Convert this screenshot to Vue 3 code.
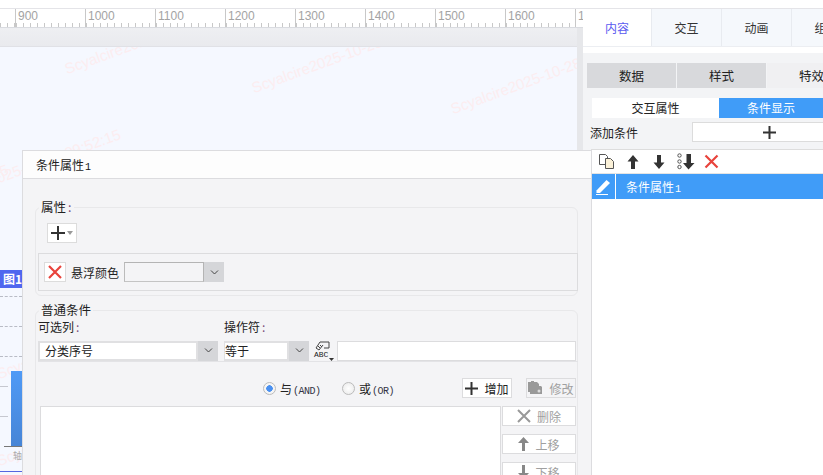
<script setup>
const rulerLabels = [900, 1000, 1100, 1200, 1300, 1400, 1500, 1600]
const tabs = [
  { label: '内容', active: true },
  { label: '交互' },
  { label: '动画' },
  { label: '组件' }
]
const marks = [
  { text: 'Scyalcire2025-10-28', left: 68, top: 13 },
  { text: 'Scyalcire2025-10-28', left: 255, top: 32 },
  { text: 'Scyalcire2025-10-28', left: 454, top: 53 },
  { text: '2025-10-28 09:52:15', left: -8, top: 125 },
  { text: 'Scyalcire2025', left: -78, top: 145 },
  { text: 'Scyalcire', left: 0, top: 318 },
  { text: 'Scyalcire', left: 0, top: 405 }
]
</script>

<template>
  <div class="page">
    <div class="topstrip"></div>
    <div class="main">
      <section class="work">
        <div class="ruler">
          <div class="ruler-lead"></div>
          <div v-for="n in rulerLabels" :key="n" class="ruler-cell">{{ n }}</div>
          <div class="ruler-tail">1</div>
        </div>
        <div class="lower">
          <div class="stage">
            <div class="band"></div>
            <div class="canvas">
              <span v-for="(m, i) in marks" :key="i" class="mark" :style="{ left: m.left + 'px', top: m.top + 'px' }">{{ m.text }}</span>
              <div class="chart-tag">图1</div>
              <div class="dash d1"></div>
              <div class="dash d2"></div>
              <div class="dash d3"></div>
              <div class="tick t1"></div>
              <div class="tick t2"></div>
              <div class="bar"></div>
              <div class="axis"></div>
              <div class="axis-label">轴</div>
              <div class="chart-foot"></div>
            </div>
          </div>
          <div class="gutter"></div>
        </div>
      </section>
      <aside class="side">
        <nav class="tabs">
          <div v-for="t in tabs" :key="t.label" class="tab" :class="{ active: t.active }">{{ t.label }}</div>
        </nav>
        <div class="side-body">
          <div class="subtabs">
            <div class="subtab">数据</div>
            <div class="subtab">样式</div>
            <div class="subtab light">特效</div>
          </div>
          <div class="modes">
            <div class="mode">交互属性</div>
            <div class="mode on">条件显示</div>
          </div>
          <div class="addrow">
            <span class="addlabel">添加条件</span>
            <div class="addbtn">
              <svg width="13" height="13" viewBox="0 0 13 13"><path d="M6.500 0v13M0 6.500h13" stroke="#333" stroke-width="2"/></svg>
            </div>
          </div>
          <div class="listpanel">
            <div class="listtools">
              <svg class="ti-copy" width="17" height="17" viewBox="0 0 17 17"><path d="M1.500 1.500h6l2 2v8h-8z" fill="#fff" stroke="#555"/><path d="M7.500 5.500h5l3 3v7h-8z" fill="#fbf1d8" stroke="#555"/></svg>
              <svg class="ti-up" width="12" height="16" viewBox="0 0 12 16"><path d="M6 1 .5 7.500H4V15h4V7.500h3.500z" fill="#333"/></svg>
              <svg class="ti-down" width="12" height="16" viewBox="0 0 12 16"><path d="M6 15 .5 8.500H4V1h4v7.500h3.500z" fill="#333"/></svg>
              <svg class="ti-more" width="18" height="17" viewBox="0 0 18 17"><circle cx="2.500" cy="2.500" r="1.700" fill="none" stroke="#555"/><circle cx="2.500" cy="8.500" r="1.700" fill="none" stroke="#555"/><circle cx="2.500" cy="14" r="1.700" fill="none" stroke="#555"/><path d="M11.500 16.500 6 10h3.500V1h4.500v9h3.500z" fill="#333"/></svg>
              <svg class="ti-del" width="15" height="15" viewBox="0 0 15 15"><path d="M1.500 1.500l12 12M13.500 1.500l-12 12" stroke="#e8433c" stroke-width="2.200"/></svg>
            </div>
            <div class="listitem">
              <div class="pen">
                <svg width="16" height="16" viewBox="0 0 16 16"><path d="M1.500 11.500 11.500 1 15 4 5 14H1.500z" fill="#fff"/><path d="M1 15.500h12" stroke="#fff"/></svg>
              </div>
              <span class="itemtext">条件属性<i class="num">1</i></span>
            </div>
          </div>
        </div>
      </aside>
    </div>

    <div class="dialog">
      <header class="dhead">条件属性<i class="num dark">1</i></header>
      <div class="dbody">
        <fieldset class="group attr">
          <legend>属性<i class="colon">:</i></legend>
          <div class="plusbtn">
            <svg width="14" height="14" viewBox="0 0 14 14"><path d="M7 0v14M0 7h14" stroke="#333" stroke-width="2"/></svg>
            <svg width="6" height="4" viewBox="0 0 6 4"><path d="M0 0h6L3 4z" fill="#999"/></svg>
          </div>
          <div class="attrrow">
            <div class="xbtn">
              <svg width="14" height="14" viewBox="0 0 14 14"><path d="M1 1l12 12M13 1 1 13" stroke="#e8433c" stroke-width="2.200"/></svg>
            </div>
            <span class="attrname">悬浮颜色</span>
            <div class="combo color">
              <div class="field inset"></div>
              <div class="caret">
                <svg width="9" height="5" viewBox="0 0 9 5"><path d="M1 .5l3.500 3.500L8 .5" fill="none" stroke="#444"/></svg>
              </div>
            </div>
          </div>
        </fieldset>
        <fieldset class="group cond">
          <legend>普通条件</legend>
          <div class="labels">
            <span class="lab first">可选列<i class="colon">:</i></span>
            <span class="lab">操作符<i class="colon">:</i></span>
          </div>
          <div class="filter">
            <div class="combo col">
              <div class="field pad">分类序号</div>
              <div class="caret"><svg width="9" height="5" viewBox="0 0 9 5"><path d="M1 .5l3.500 3.500L8 .5" fill="none" stroke="#444"/></svg></div>
            </div>
            <div class="combo op">
              <div class="field">等于</div>
              <div class="caret"><svg width="9" height="5" viewBox="0 0 9 5"><path d="M1 .5l3.500 3.500L8 .5" fill="none" stroke="#444"/></svg></div>
            </div>
            <div class="abc">
              <svg class="abc-top" width="15" height="10" viewBox="0 0 15 10"><path d="M1 7 5 1h9v6H9M1 7l3 2 4-5M3 5l2 2M5 4l2 2" fill="none" stroke="#444"/></svg>
              <span class="abc-text">ABC</span>
              <svg class="abc-drop" width="5" height="3" viewBox="0 0 5 3"><path d="M0 0h5L2.500 3z" fill="#333"/></svg>
            </div>
            <div class="valuebox"></div>
          </div>
          <div class="rule"></div>
          <div class="logic">
            <span class="radio checked"></span>
            <span class="rlabel">与<i class="latin">(AND)</i></span>
            <span class="radio second"></span>
            <span class="rlabel">或<i class="latin">(OR)</i></span>
            <div class="btn add">
              <svg width="13" height="13" viewBox="0 0 13 13"><path d="M6.500 0v13M0 6.500h13" stroke="#333" stroke-width="2"/></svg>
              <span>增加</span>
            </div>
            <div class="btn edit muted">
              <svg width="15" height="14" viewBox="0 0 15 14"><path d="M0 1h3V0h3v1h3l2 2v2h2l1 1v7H2v-2H0z" fill="#999"/><circle cx="11" cy="10" r="1.500" fill="#ddd"/></svg>
              <span>修改</span>
            </div>
          </div>
          <div class="listarea">
            <div class="conds"></div>
            <div class="actions">
              <div class="btn muted">
                <svg width="14" height="14" viewBox="0 0 14 14"><path d="M1 1l12 12M13 1 1 13" stroke="#999" stroke-width="2"/></svg>
                <span>删除</span>
              </div>
              <div class="btn muted">
                <svg width="11" height="14" viewBox="0 0 11 14"><path d="M5.500 0 0 6h4v8h3V6h4z" fill="#888"/></svg>
                <span>上移</span>
              </div>
              <div class="btn muted">
                <svg width="11" height="14" viewBox="0 0 11 14"><path d="M5.500 14 0 8h4V0h3v8h4z" fill="#888"/></svg>
                <span>下移</span>
              </div>
            </div>
          </div>
        </fieldset>
      </div>
    </div>
  </div>
</template>

<style>
html, body { margin: 0; padding: 0; overflow: hidden; background: #fff; }
</style>

<style scoped>
.page {
  position: relative;
  width: 823px;
  height: 475px;
  overflow: hidden;
  font-family: "Noto Sans CJK SC", "Liberation Sans", sans-serif;
  font-size: 12px;
  color: #222;
  background: #fff;
}
i { font-style: normal; }
.topstrip { height: 8px; background: #fff; border-bottom: 1px solid #e4e4e8; }
.main { display: flex; height: 466px; }
.work { width: 583px; flex: none; display: flex; flex-direction: column; overflow: hidden; }
.ruler {
  display: flex;
  height: 19px;
  flex: none;
  box-sizing: border-box;
  background: #fff;
  border-bottom: 1px solid #d9dbe0;
}
.ruler-lead {
  width: 15px;
  flex: none;
  background: repeating-linear-gradient(90deg, #c8c8c8 0 1px, transparent 1px 7px) 0 100% / 100% 4px no-repeat;
}
.ruler-cell {
  width: 70px;
  flex: none;
  box-sizing: border-box;
  padding-left: 2px;
  border-left: 1px solid #c8c8c8;
  font: 12px/14px "Liberation Sans", sans-serif;
  color: #a3a3a3;
  background: repeating-linear-gradient(90deg, #c8c8c8 0 1px, transparent 1px 7px) 0 100% / 100% 4px no-repeat;
}
.ruler-tail {
  flex: 1;
  box-sizing: border-box;
  padding-left: 2px;
  border-left: 1px solid #c8c8c8;
  overflow: hidden;
  font: 12px/14px "Liberation Sans", sans-serif;
  color: #a3a3a3;
}
.lower { flex: 1; display: flex; min-height: 0; }
.stage { width: 577px; flex: none; display: flex; flex-direction: column; }
.band { height: 19px; flex: none; background: linear-gradient(#eeeff2, #e9eaee); border-bottom: 1px solid #e0e1e6; box-sizing: border-box; }
.canvas { position: relative; flex: 1; background: #f5f8ff; overflow: hidden; }
.mark {
  position: absolute;
  white-space: nowrap;
  font: 15px "Liberation Sans", sans-serif;
  color: #fcedf0;
  transform: rotate(-20deg);
  transform-origin: 0 100%;
}
.chart-tag {
  position: absolute;
  left: 0;
  top: 223px;
  width: 22px;
  height: 18px;
  background: #4f67ef;
  color: #fff;
  font-weight: 700;
  font-size: 12px;
  line-height: 18px;
  text-align: right;
}
.dash { position: absolute; left: 0; width: 22px; border-top: 1px dashed #b9bcc6; }
.d1 { top: 249px; }
.d2 { top: 279px; }
.d3 { top: 309px; }
.tick { position: absolute; left: 0; width: 8px; height: 1px; background: #c6c8d0; }
.t1 { top: 339px; }
.t2 { top: 369px; }
.bar { position: absolute; left: 11px; top: 324px; width: 11px; height: 76px; background: linear-gradient(#4f9af6, #4785d6); }
.axis { position: absolute; left: 4px; top: 399px; width: 18px; height: 1px; background: #777; }
.axis-label { position: absolute; left: 13px; top: 403px; font-size: 9px; line-height: 12px; color: #aaa; }
.chart-foot { position: absolute; left: 0; top: 424px; width: 22px; height: 1px; background: #5566e0; }
.gutter { flex: 1; background: #e6e7ea; }
.side { flex: 1; min-width: 0; display: flex; flex-direction: column; background: #fff; overflow: hidden; }
.tabs { display: flex; height: 38px; flex: none; background: #f5f8fc; border-bottom: 1px solid #eceef2; box-sizing: border-box; }
.tab {
  width: 70px;
  flex: none;
  box-sizing: border-box;
  text-align: center;
  font-size: 12px;
  line-height: 37px;
  border-right: 1px solid #e8ebf0;
  color: #333;
}
.tab.active { width: 69px; background: #fff; color: #5a5af0; }
.side-body { flex: 1; margin-top: 6px; background: #f3f4f6; padding-top: 10px; display: flex; flex-direction: column; }
.subtabs { display: flex; height: 25px; gap: 1px; margin-left: 4px; flex: none; }
.subtab { width: 89px; flex: none; background: #d8d9dc; font-size: 12.500px; line-height: 25px; text-align: center; }
.subtab.light { background: #f0f0f2; }
.modes { display: flex; height: 20px; margin: 10px 0 0 9px; flex: none; }
.mode { width: 127px; flex: none; background: #fff; text-align: center; line-height: 20px; }
.mode.on { width: 110px; background: #409cf8; color: #fff; padding-right: 6px; box-sizing: border-box; }
.addrow { display: flex; align-items: center; height: 20px; margin: 4px 0 0 7px; flex: none; overflow: hidden; }
.addlabel { width: 102px; flex: none; }
.addbtn { width: 154px; flex: none; height: 20px; box-sizing: border-box; border: 1px solid #dcdcdc; background: #fff; display: flex; align-items: center; justify-content: center; }
.listpanel { flex: 1; margin: 7px 0 0 8px; background: #fff; border-top: 1px solid #ddd; }
.listtools { display: flex; align-items: center; height: 23px; padding-left: 7px; border-bottom: 1px solid #e4e4e4; }
.ti-up { margin-left: 12px; }
.ti-down { margin-left: 14px; }
.ti-more { margin-left: 12px; }
.ti-del { margin-left: 9px; }
.listitem { display: flex; height: 25px; background: #409cf8; color: #fff; }
.pen { width: 24px; display: flex; align-items: center; justify-content: center; border-right: 1px solid #fff; }
.itemtext { padding-left: 10px; line-height: 25px; }
.num { font: 10px "Liberation Mono", monospace; margin-left: 1px; }
.dark { color: #111; }
.dialog {
  position: absolute;
  left: 22px;
  top: 150px;
  width: 570px;
  height: 330px;
  box-sizing: border-box;
  background: #f4f4f6;
  border: 1px solid #dcdcdf;
  display: flex;
  flex-direction: column;
}
.dhead { height: 27px; flex: none; background: #fdfdfd; border-bottom: 1px solid #dcdcdf; padding-left: 13px; line-height: 27px; color: #222; }
.dbody { flex: 1; padding: 20px 13px 0 12px; display: flex; flex-direction: column; gap: 6px; }
.group {
  margin: 0;
  min-width: 0;
  border: 1px solid #e8e8ea;
  border-radius: 6px;
  box-sizing: border-box;
  padding: 0;
}
.group legend { padding: 0 2px; margin-left: 3px; font-size: 12.500px; line-height: 16px; color: #222; }
.colon { color: #7a4a7a; margin-left: 2px; }
.attr { height: 97px; }
.plusbtn {
  width: 30px;
  height: 20px;
  margin: 8px 0 0 11px;
  box-sizing: border-box;
  border: 1px solid #dcdcdc;
  background: #fff;
  display: flex;
  align-items: center;
  justify-content: center;
  gap: 2px;
}
.attrrow {
  height: 38px;
  margin: 10px 0 0 2px;
  box-sizing: border-box;
  border: 1px solid #dcdcde;
  display: flex;
  align-items: center;
  padding-left: 5px;
  width: 540px;
}
.xbtn { width: 22px; height: 20px; box-sizing: border-box; border: 1px solid #dcdcdc; background: #fff; display: flex; align-items: center; justify-content: center; }
.attrname { margin-left: 5px; width: 53px; flex: none; font-size: 12px; }
.combo { display: flex; height: 20px; flex: none; box-sizing: border-box; }
.field { flex: 1; background: #fff; border: 2px solid #e0e0e2; box-sizing: border-box; line-height: 16px; font-size: 12px; }
.inset { background: #f4f4f6; border: 1px solid; border-color: #b4b4b4 #b4b4b4 #c4c4c4 #bbb; }
.pad { padding-left: 5px; }
.op .field { border-left-width: 1px; }
.caret { width: 20px; flex: none; background: #d5d6d9; display: flex; align-items: center; justify-content: center; }
.color { width: 100px; }
.cond { flex: 1; }
.labels { display: flex; height: 16px; margin-top: 1px; }
.lab { font-size: 12px; line-height: 16px; }
.first { margin-left: 2px; width: 186px; flex: none; }
.filter { display: flex; align-items: center; height: 21px; margin: 5px 0 0 2px; }
.col { width: 180px; margin-right: 6px; }
.op { width: 85px; margin-right: 5px; }
.abc { position: relative; width: 18px; height: 20px; flex: none; margin-right: 5px; }
.abc-top { position: absolute; left: 1px; top: 0; }
.abc-text { position: absolute; left: 0; top: 9px; font: 8px/9px "Liberation Mono", monospace; color: #222; }
.abc-drop { position: absolute; right: -2px; bottom: 0; }
.valuebox { width: 239px; flex: none; height: 20px; box-sizing: border-box; background: #fff; border: 1px solid #dcdcde; }
.rule { height: 1px; width: 540px; margin-left: 2px; background: #e3e3e6; }
.logic { display: flex; align-items: center; height: 20px; margin-top: 16px; padding-left: 227px; }
.radio { width: 13px; height: 13px; flex: none; box-sizing: border-box; border-radius: 50%; border: 1px solid #bbb; background: radial-gradient(#fff, #e8e8e8); }
.radio.checked { background: radial-gradient(circle, #4a90f0 0 3px, #f5f5f5 3.500px); }
.radio.second { margin-left: 21px; }
.rlabel { margin-left: 4px; font-size: 12px; white-space: nowrap; width: 41px; flex: none; }
.latin { font: 10px "Liberation Mono", monospace; letter-spacing: -.5px; color: #334; margin-left: 1px; }
.radio.second + .rlabel { width: 103px; }
.btn { width: 50px; height: 20px; flex: none; box-sizing: border-box; border: 1px solid #dcdcde; background: #fff; display: flex; align-items: center; justify-content: center; gap: 6px; font-size: 12px; }
.edit { margin-left: 14px; background: #f4f4f6; }
.muted { color: #a0a0a0; }
.actions .btn { width: 74px; background: #fff; }
.listarea { display: flex; margin: 8px 0 0 4px; }
.conds { width: 461px; height: 90px; flex: none; background: #fff; border: 1px solid #dcdcde; box-sizing: border-box; margin-right: 1px; }
.actions { display: flex; flex-direction: column; gap: 8px; }
</style>
